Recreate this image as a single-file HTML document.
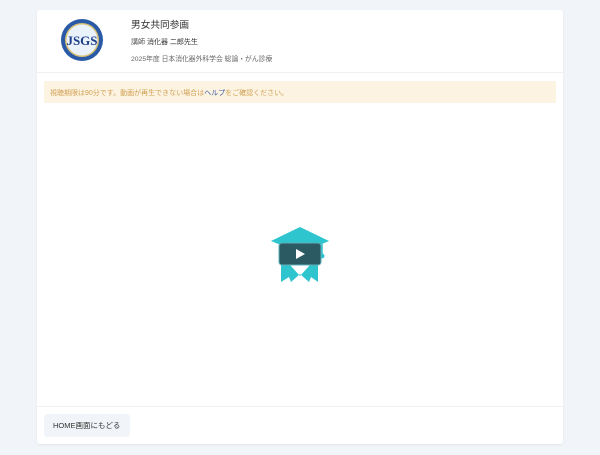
<!DOCTYPE html>
<html><head><meta charset="utf-8"><style>
body{margin:0;width:600px;height:455px;background:#f1f4f8;font-family:"Liberation Sans","Noto Sans CJK JP",sans-serif;position:relative;overflow:hidden}
.card{position:absolute;left:37px;top:10px;width:526px;height:434px;background:#fff;border-radius:3px;box-shadow:0 1px 2px rgba(0,0,0,.06)}
.hl{position:absolute;left:0;right:0;height:1px;background:#eef0f3}
.t{position:absolute;white-space:nowrap}
</style></head><body>
<div class="card">
<svg style="position:absolute;left:23px;top:8px" width="44" height="44" viewBox="0 0 44 44">
<circle cx="22" cy="22" r="21" fill="#2a5aa6"/><circle cx="22" cy="22" r="17" fill="#d8c27a"/><circle cx="22" cy="22" r="15.5" fill="#eaf2fb"/>
<text x="22" y="27" text-anchor="middle" font-family="Liberation Serif" font-weight="bold" font-size="13" fill="#1d3f8a">JSGS</text></svg>
<div class="t" style="left:94px;top:7px;font-size:9.7px;color:#333">男女共同参画</div>
<div class="t" style="left:94px;top:27px;font-size:7px;color:#555">講師 <span style="color:#333">消化器 二郎先生</span></div>
<div class="t" style="left:94px;top:43px;font-size:6.8px;color:#666">2025年度 日本消化器外科学会 総論・がん診療</div>
<div class="hl" style="top:62px"></div>
<div style="position:absolute;left:7px;top:71px;width:512px;height:22px;background:#fdf3e3;border-radius:2px"></div>
<div class="t" style="left:13px;top:78px;font-size:7px;color:#d0a050">視聴期限は90分です。動画が再生できない場合は<span style="color:#3a5a9a">ヘルプ</span>をご確認ください。</div>
<svg style="position:absolute;left:233px;top:217px" width="60" height="56" viewBox="0 0 60 56">
<polygon points="30,0 59,14 30,26 1,14" fill="#2ec5cf"/>
<line x1="52" y1="14" x2="52" y2="27" stroke="#2ec5cf" stroke-width="1.5"/><circle cx="52" cy="29" r="2.5" fill="#2ec5cf"/>
<polygon points="11,38 20,38 30,49 40,38 48,38 48,55 41,50 39,55 30,47 21,55 19,50 11,55" fill="#2ec5cf"/>
<rect x="9" y="16" width="42" height="22" rx="3" fill="#2b5a62" stroke="#5fb0b8" stroke-width="1"/>
<polygon points="26,22 26,32 35,27" fill="#fff"/>
</svg>
<div class="hl" style="top:396px"></div>
<div style="position:absolute;left:7px;top:404px;width:86px;height:23px;background:#f1f4f8;border-radius:3px"></div>
<div class="t" style="left:16px;top:410px;font-size:7.5px;color:#333">HOME画面にもどる</div>
</div>
</body></html>
